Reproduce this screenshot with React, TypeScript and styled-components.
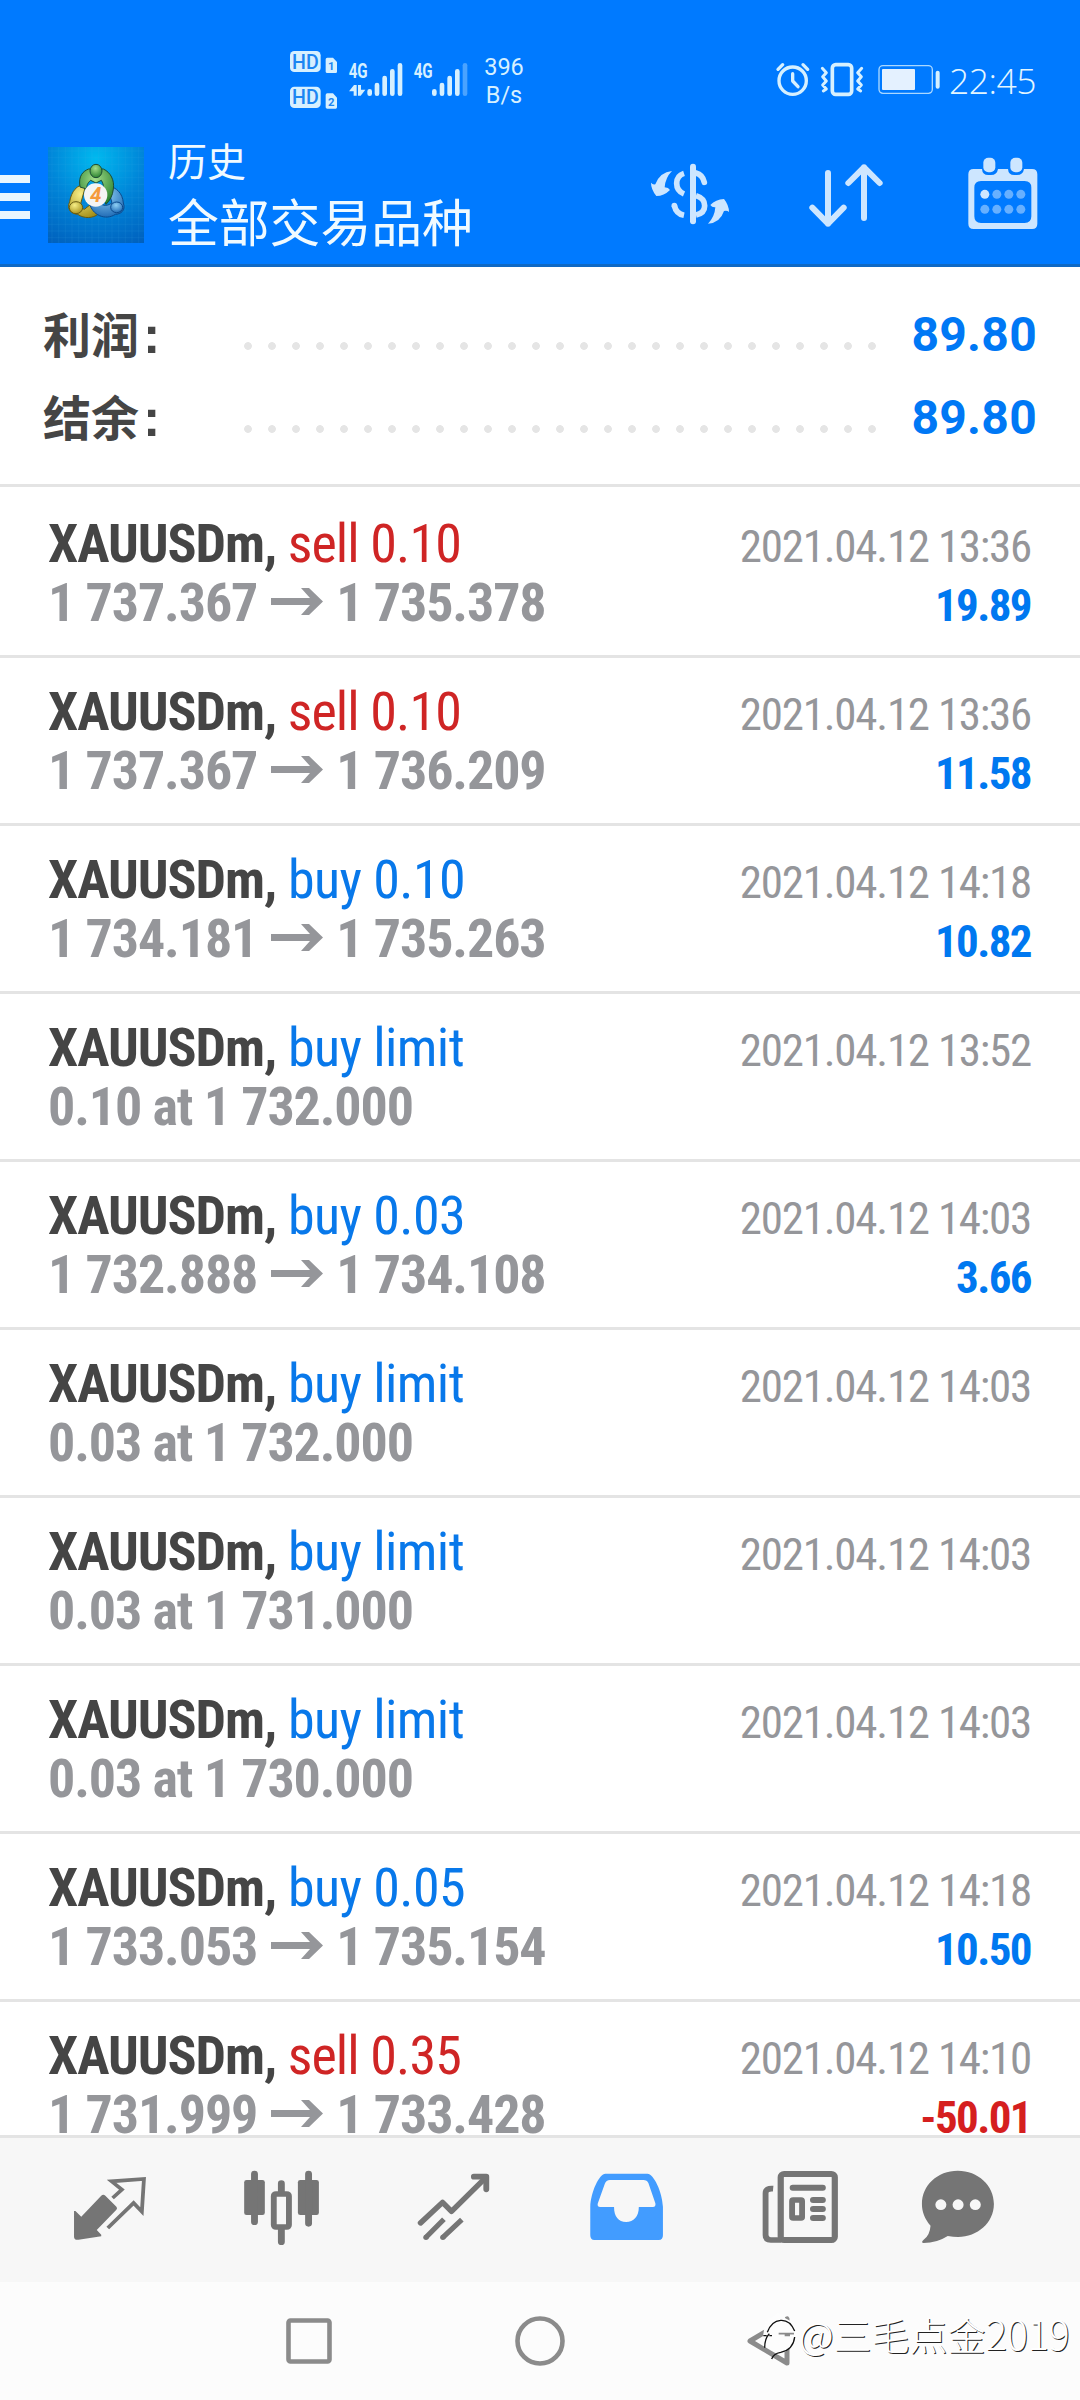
import React from "react";
import styled, { createGlobalStyle } from "styled-components";

const Global = createGlobalStyle`
  * { box-sizing: border-box; }
  body { margin: 0; background: #fff; font-family: Roboto, "Noto Sans CJK SC", sans-serif; }
  svg { display: block; flex: none; overflow: visible; }
`;

const Screen = styled.div`
  width: 1080px;
  height: 2400px;
  display: flex;
  flex-direction: column;
  overflow: hidden;
  background: #fff;
`;

const Header = styled.header`
  height: 267px;
  flex: none;
  background: #007aff;
  border-bottom: 3px solid #0f69c4;
`;

const StatusBar = styled.div`
  height: 130px;
  padding: 42px 43px 0 290px;
  display: flex;
  align-items: flex-start;
  color: #d6f0ff;
`;

const Speed = styled.div`
  width: 60px;
  margin: 11px 0 0 54px;
  font-size: 23.5px;
  line-height: 28px;
  text-align: center;
`;

const StatusRight = styled.div`
  margin-left: auto;
  display: flex;
  align-items: flex-start;
`;

const DeviceSlot = styled.div`
  margin-top: 20px;
`;

const Clock = styled.div`
  margin: 12px 0 0 7px;
  width: 88px;
  font: 300 35.5px/52px "Open Sans", sans-serif;
  letter-spacing: -0.5px;
  color: #e4f6ff;
  white-space: nowrap;
`;

const AppBar = styled.div`
  height: 134px;
  display: flex;
  align-items: flex-start;
  color: #f0faff;
`;

const Menu = styled.div`
  width: 30px;
  padding-top: 45px;
  display: grid;
  gap: 10px;
`;

const MenuLine = styled.span`
  height: 8px;
  background: #e9f6ff;
`;

const Logo = styled.div`
  margin: 17px 0 0 18px;
`;

const Titles = styled.div`
  margin-left: 24px;
  flex: 1;
  font-family: "Noto Sans CJK SC", sans-serif;
`;

const Section = styled.div`
  margin-top: 8px;
  font-size: 39px;
  line-height: 42px;
`;

const Title = styled.div`
  margin-top: 12px;
  font-size: 50.8px;
  line-height: 56px;
`;

const Actions = styled.div`
  display: flex;
  align-items: center;
  padding: 26px 41px 0 0;
`;

const Action = styled.div<{ $after?: number }>`
  margin-right: ${(p) => p.$after ?? 0}px;
`;

const Summary = styled.section`
  height: 220px;
  flex: none;
  padding: 26px 43px 0;
  border-bottom: 3px solid #e4e4e4;
`;

const SummaryRow = styled.div`
  height: 83px;
  display: flex;
  align-items: center;
  color: #454545;
  font-weight: 700;
  font-size: 48px;
`;

const SummaryLabel = styled.span`
  width: 193px;
  height: 83px;
  display: flex;
  font-family: "Noto Sans CJK SC", sans-serif;
  line-height: 78px;
`;

const Colon = styled.span`
  margin-left: 4px;
  font-family: "Liberation Sans", sans-serif;
  font-size: 52px;
  line-height: 84px;
`;

const Dots = styled.span`
  width: 648px;
  height: 8px;
  margin-top: 23px;
  background: radial-gradient(circle at 12px 4px, #e5e5e5 3.5px, transparent 4.2px) 0 0 / 24px 8px repeat-x;
`;

const SummaryValue = styled.span`
  margin-left: auto;
  color: #0078f5;
  letter-spacing: 0.3px;
  line-height: 83px;
`;

const List = styled.main`
  height: 1648px;
  flex: none;
  padding-top: 3px;
`;

const Row = styled.div`
  height: 168px;
  padding: 24px 48px 0;
  border-bottom: 3px solid #e4e4e4;
  display: grid;
  grid-template-columns: 1fr auto;
  grid-template-rows: 59px 59px;
  align-items: baseline;
  font-family: "Roboto Condensed", Roboto, sans-serif;
  font-stretch: 75%;
  font-size: 54px;
  line-height: 59px;
  white-space: nowrap;

  &:last-child {
    height: 133px;
    border-bottom: 0;
  }
`;

const Deal = styled.div<{ $sell?: boolean }>`
  color: ${(p) => (p.$sell ? "#cf2525" : "#0878ea")};
  letter-spacing: ${(p) => (p.$sell ? -0.9 : -0.6)}px;
`;

const Instrument = styled.b`
  color: #454545;
  letter-spacing: -1.05px;
`;

const Price = styled.div`
  color: #95969a;
  font-weight: 700;
  letter-spacing: -1.1px;
`;

const Arrow = styled.svg`
  display: inline-block;
  margin: 0 13px 0 14px;
  vertical-align: 5px;
`;

const Time = styled.div`
  margin-right: 1px;
  color: #95969a;
  font-size: 45px;
  letter-spacing: -1.25px;
  text-align: right;
`;

const Profit = styled.div<{ $loss?: boolean }>`
  margin-right: 1px;
  color: ${(p) => (p.$loss ? "#d51f1f" : "#0078f0")};
  font-size: 45px;
  font-weight: 700;
  letter-spacing: -1.6px;
  text-align: right;
`;

const Tabs = styled.nav`
  height: 147px;
  flex: none;
  border-top: 3px solid #e4e4e4;
  background: #f7f7f7;
  padding: 32px 48px 0 24px;
  display: grid;
  grid-template-columns: repeat(5, 172px) 148px;
  justify-items: center;
  align-items: start;
`;

const SystemNav = styled.div`
  position: relative;
  flex: 1;
  background: #fcfcfc;
  padding: 34px 290px 0 286px;
  display: flex;
  justify-content: space-between;
  align-items: flex-start;
`;

const Watermark = styled.div`
  position: absolute;
  left: 761px;
  top: 27px;
  display: flex;
  align-items: center;
  color: #fff;
  font: 300 38px/58px "Noto Sans CJK SC", sans-serif;
  text-shadow: 1px 1px 0 #222;
  white-space: nowrap;
`;

const WatermarkText = styled.span`
  margin-top: -5px;
`;

const WatermarkYear = styled.span`
  font-size: 40px;
  letter-spacing: -0.5px;
`;

type DealRecord = { side: "sell" | "buy"; what: string; from: string; to?: string; time: string; profit?: string };

const deals: DealRecord[] = [
  { side: "sell", what: "0.10", from: "1 737.367", to: "1 735.378", time: "2021.04.12 13:36", profit: "19.89" },
  { side: "sell", what: "0.10", from: "1 737.367", to: "1 736.209", time: "2021.04.12 13:36", profit: "11.58" },
  { side: "buy", what: "0.10", from: "1 734.181", to: "1 735.263", time: "2021.04.12 14:18", profit: "10.82" },
  { side: "buy", what: "limit", from: "0.10 at 1 732.000", time: "2021.04.12 13:52" },
  { side: "buy", what: "0.03", from: "1 732.888", to: "1 734.108", time: "2021.04.12 14:03", profit: "3.66" },
  { side: "buy", what: "limit", from: "0.03 at 1 732.000", time: "2021.04.12 14:03" },
  { side: "buy", what: "limit", from: "0.03 at 1 731.000", time: "2021.04.12 14:03" },
  { side: "buy", what: "limit", from: "0.03 at 1 730.000", time: "2021.04.12 14:03" },
  { side: "buy", what: "0.05", from: "1 733.053", to: "1 735.154", time: "2021.04.12 14:18", profit: "10.50" },
  { side: "sell", what: "0.35", from: "1 731.999", to: "1 733.428", time: "2021.04.12 14:10", profit: "-50.01" },
];

const PALE = "#d6f0ff";

function SignalIcons() {
  return (
    <svg width="130" height="68" viewBox="60 36 390 204" fill={PALE} fontFamily="Roboto" fontWeight="700">
      <rect x="60" y="63" width="92" height="63" rx="13" />
      <rect x="60" y="170" width="92" height="64" rx="13" />
      <path d="M172 83h17l12 13v29q0 4-4 4h-25q-5 0-5-4V88q0-5 5-5zM172 190h17l12 13v29q0 4-4 4h-25q-5 0-5-4v-37q0-5 5-5z" />
      <g fill="#1c86f2">
        <text x="66" y="116" fontSize="58" fontWeight="500" textLength="80" lengthAdjust="spacingAndGlyphs">HD</text>
        <text x="66" y="223" fontSize="58" fontWeight="500" textLength="80" lengthAdjust="spacingAndGlyphs">HD</text>
        <text x="174" y="121" fontSize="34">1</text>
        <text x="174" y="228" fontSize="34">2</text>
      </g>
      <text x="236" y="143" fontSize="58" textLength="57" lengthAdjust="spacingAndGlyphs">4G</text>
      <text x="431" y="143" fontSize="58" textLength="57" lengthAdjust="spacingAndGlyphs">4G</text>
      <path d="M237 184l15-19h8v32h-9v-13zM264 165h9v14h13l-14 18h-8z" />
      <g strokeWidth="14" strokeLinecap="round" stroke={PALE}>
        <path d="M299 184v7M321 165v26M344 144v47M367 124v67M390 106v85M493 184v7M516 165v26M539 144v47M562 124v67" />
        <path d="M585 106v85" opacity=".35" />
      </g>
    </svg>
  );
}

function DeviceIcons() {
  return (
    <svg width="166" height="36" viewBox="48 66 498 108" fill="none" stroke={PALE} strokeWidth="9" strokeLinecap="round" strokeLinejoin="round">
      <circle cx="98" cy="122" r="41" strokeWidth="10" />
      <path d="M98 101v22l16 17M54 88l14-14M143 88l-14-14" strokeWidth="10" />
      <rect x="217" y="74" width="58" height="89" rx="10" strokeWidth="11" />
      <path d="M187 85l12 13-11 12 11 13-11 12 11 12-9 6M305 85l-12 13 11 12-11 13 11 12-11 12 9 6" strokeWidth="9" />
      <rect x="357" y="77" width="160" height="83" rx="12" strokeWidth="4" opacity=".8" />
      <rect x="366" y="87" width="99" height="63" rx="3" fill="#e4f1ff" stroke="none" />
      <path d="M533 98v42" strokeWidth="12" />
    </svg>
  );
}

function AppLogo() {
  const grid = [24, 44, 64, 84, 104, 124, 144, 164, 184, 204, 224, 244, 264, 284];
  return (
    <svg width="96" height="96" viewBox="12 12 288 288">
      <defs>
        <radialGradient id="sky" cx=".5" cy=".12" r="1">
          <stop offset="0" stopColor="#00b9ef" />
          <stop offset=".5" stopColor="#0084d8" />
          <stop offset="1" stopColor="#0060bd" />
        </radialGradient>
        <radialGradient id="green" cx=".45" cy=".3" r=".75">
          <stop offset="0" stopColor="#a4dd8a" />
          <stop offset="1" stopColor="#237d2b" />
        </radialGradient>
        <radialGradient id="gold" cx=".4" cy=".3" r=".8">
          <stop offset="0" stopColor="#f6ee87" />
          <stop offset="1" stopColor="#a08a13" />
        </radialGradient>
        <radialGradient id="blue" cx=".45" cy=".3" r=".8">
          <stop offset="0" stopColor="#8fd0f5" />
          <stop offset="1" stopColor="#125fae" />
        </radialGradient>
      </defs>
      <path fill="url(#sky)" d="M12 12h288v288H12z" />
      <path stroke="#4db8ee" strokeOpacity=".22" strokeWidth="1.5" d={grid.map((g) => `M${g} 12v288M12 ${g}h288`).join("")} />
      <g stroke="#1d4c35" strokeWidth="3">
        <path fill="url(#gold)" d="M126 124C98 124 82 146 77 176c-10 22 4 36 24 38 20 14 46 12 62-1l-24-28-18 14-14-6z" stroke="#665b12" />
        <path fill="url(#blue)" d="M190 128c28 4 46 24 48 52 8 22-8 34-24 34-30 20-70 2-78-34l26-6c10 14 24 18 42 6z" stroke="#0c4b8d" />
        <path fill="url(#green)" d="M108 132C102 98 118 84 134 78h44c22 10 34 34 30 60-2 20-10 34-22 46l-14-30c10-14 8-28 0-42l-16 8-16-8c-10 8-12 16-12 26z" />
        <ellipse cx="156" cy="84" rx="18" ry="20" fill="url(#green)" />
        <ellipse cx="96" cy="194" rx="20" ry="18" fill="url(#gold)" stroke="#665b12" />
        <ellipse cx="218" cy="193" rx="18" ry="16" fill="url(#blue)" stroke="#0c4b8d" />
      </g>
      <circle cx="155" cy="156" r="35" fill="#f4f4f4" />
      <text x="155" y="178" textAnchor="middle" fontFamily="Roboto" fontStyle="italic" fontWeight="700" fontSize="62" fill="#f59a3c">4</text>
    </svg>
  );
}

function CurrencyIcon() {
  return (
    <svg width="80" height="66" viewBox="90 60 240 198" fill="#cde6ff">
      <g fill="none" stroke="#cde6ff" strokeWidth="17">
        <path d="M219 77v164" strokeLinecap="round" strokeWidth="18" />
        <path d="M192 97Q170 104 170 127T192 159" />
        <path d="M228 96Q248 101 253 124" strokeLinecap="round" />
        <path d="M228 164Q254 172 254 194T228 222" />
        <path d="M163 193Q168 218 192 223" />
      </g>
      <circle cx="163" cy="194" r="8.500" />
      <path d="M156 90Q120 93 106 130Q98 132 93 125Q93 145 109 165Q132 165 150 147Q146 140 134 139Q136 110 156 90z" />
      <path d="M264 248Q284 228 286 199Q276 200 271 192Q287 175 312 174Q327 193 327 213Q321 207 312 210Q300 246 264 248z" />
    </svg>
  );
}

function SortIcon() {
  return (
    <svg width="76" height="66" viewBox="564 60 228 198" fill="none" stroke="#cde6ff" strokeWidth="18" strokeLinecap="round" strokeLinejoin="round">
      <path d="M624 96v152M577 200l47 48 47-48M732 231V79M685 126l47-47 47 47" />
    </svg>
  );
}

function CalendarIcon() {
  return (
    <svg width="72" height="76" viewBox="1040 48 216 228" fill="#cde6ff">
      <path fillRule="evenodd" d="M1060 87h25q1 18 19 18h8q18 0 21-18h30q1 18 19 18h8q18 0 21-18h24q16 0 16 16v148q0 16-16 16h-175q-16 0-16-16V103q0-16 16-16zM1082 123q-20 0-20 20v86q0 20 20 20h131q20 0 20-20v-86q0-20-20-20z" />
      <rect x="1089" y="53" width="36" height="44" rx="15" />
      <rect x="1170" y="53" width="36" height="44" rx="15" />
      {[0, 1, 2, 3].map((i) => (
        <g key={i}>
          <circle cx={1093.5 + i * 36} cy="163" r="13.500" opacity={i ? 0.5 : 1} />
          <circle cx={1093.5 + i * 36} cy="208" r="13.500" opacity=".5" />
        </g>
      ))}
    </svg>
  );
}

const INK = "#757575";

const TabIcon = ({ x, children }: { x: number; children: React.ReactNode }) => (
  <svg width="80" height="80" viewBox={`${x} 180 232.3 240`} preserveAspectRatio="none" fill={INK}>
    {children}
  </svg>
);

export default function App() {
  return (
    <Screen>
      <Global />
      <Header>
        <StatusBar>
          <SignalIcons />
          <Speed>
            396
            <br />
            B/s
          </Speed>
          <StatusRight>
            <DeviceSlot>
              <DeviceIcons />
            </DeviceSlot>
            <Clock>22:45</Clock>
          </StatusRight>
        </StatusBar>
        <AppBar>
          <Menu>
            <MenuLine />
            <MenuLine />
            <MenuLine />
          </Menu>
          <Logo>
            <AppLogo />
          </Logo>
          <Titles>
            <Section>历史</Section>
            <Title>全部交易品种</Title>
          </Titles>
          <Actions>
            <Action $after={78}>
              <CurrencyIcon />
            </Action>
            <Action $after={83}>
              <SortIcon />
            </Action>
            <Action>
              <CalendarIcon />
            </Action>
          </Actions>
        </AppBar>
      </Header>
      <Summary>
        {["利润", "结余"].map((label) => (
          <SummaryRow key={label}>
            <SummaryLabel>
              {label}
              <Colon>:</Colon>
            </SummaryLabel>
            <Dots />
            <SummaryValue>89.80</SummaryValue>
          </SummaryRow>
        ))}
      </Summary>
      <List>
        {deals.map((d, i) => (
          <Row key={i}>
            <Deal $sell={d.side === "sell"}>
              <Instrument>XAUUSDm,</Instrument> {d.side} {d.what}
            </Deal>
            <Time>{d.time}</Time>
            <Price>
              {d.from}
              {d.to && (
                <>
                  <Arrow width="52" height="28" viewBox="0 0 52 28" fill="#95969a">
                    <path d="M0 10h39L30 0h8l14 13.500L38 27h-8l9-10H0z" />
                  </Arrow>
                  {d.to}
                </>
              )}
            </Price>
            <Profit $loss={d.profit?.startsWith("-")}>{d.profit}</Profit>
          </Row>
        ))}
      </List>
      <Tabs>
        <TabIcon x={203.3}>
          <path d="M294 257q6-5 12 0l32 33q4 5 0 9l-57 61 13 14v5l-66 10q-13 2-13-9v-77h4l17 17z" />
          <path d="M327 264l27-25-30-25 94-7-6 98-24-26-75 75" fill="none" stroke={INK} strokeWidth="11" />
        </TabIcon>
        <TabIcon x={702.7}>
          <rect x="709" y="210" width="60" height="105" rx="7" />
          <rect x="865" y="210" width="61" height="105" rx="7" />
          <path d="M739 192v143M896 192v148M817 221v25M817 355v40" stroke={INK} strokeWidth="20" strokeLinecap="round" />
          <rect x="795" y="252" width="44" height="99" rx="6" fill="none" stroke={INK} strokeWidth="17" />
        </TabIcon>
        <TabIcon x={1202.1}>
          <g fill="none" stroke={INK} strokeWidth="16" strokeLinejoin="round">
            <path d="M1221 339l64-62 26 27 100-102" strokeLinecap="round" />
            <path d="M1376 200h36v38" strokeLinecap="round" strokeWidth="17" />
            <path d="M1237 382l52-54M1286 382l55-53" strokeWidth="15" />
          </g>
          <circle cx="1237" cy="382" r="8" />
          <circle cx="1286" cy="382" r="8" />
        </TabIcon>
        <TabIcon x={133.6}>
          <path fill="#429cff" fillRule="evenodd" d="M190 191H312C330 191 355 245 357 290V376Q357 390 345 390H158Q146 390 146 376V290C148 245 172 191 190 191ZM203 210Q192 210 188 222L168 280Q165 291 175 291H215C215 320 228 336 250 336C272 336 287 320 287 291H328Q337 291 335 280L315 220Q311 210 300 210Z" />
        </TabIcon>
        <TabIcon x={633}>
          <g fill="none" stroke={INK}>
            <rect x="699" y="192" width="157" height="198" rx="10" strokeWidth="18" />
            <path d="M677 236q-22-2-22 14v125q0 15 15 15h30" strokeWidth="17" />
            <rect x="732" y="270" width="29" height="54" rx="3" strokeWidth="17" />
            <path d="M734 233h87M793 270h28M793 297h28M793 324h28" strokeWidth="18" strokeLinecap="round" />
          </g>
        </TabIcon>
        <TabIcon x={1097.6}>
          <path fillRule="evenodd" d="M1213 182C1272 182 1318 226 1318 282S1270 381 1214 381Q1200 381 1184 378Q1152 399 1114 399Q1105 397 1114 389Q1132 376 1134 347C1117 327 1109 306 1109 282C1109 226 1154 182 1213 182Z" />
          <g fill="#f7f7f7">
            <circle cx="1164" cy="284" r="16" />
            <circle cx="1214" cy="284" r="16" />
            <circle cx="1264" cy="284" r="16" />
          </g>
        </TabIcon>
      </Tabs>
      <SystemNav>
        <svg width="46" height="50" fill="none" stroke="#8b8b8b" strokeWidth="4.600">
          <rect x="2.500" y="4.500" width="41" height="41" rx="2" />
        </svg>
        <svg width="50" height="50" fill="none" stroke="#8b8b8b" strokeWidth="4.600">
          <circle cx="25" cy="25" r="22.500" />
        </svg>
        <svg width="43" height="50" fill="none" stroke="#8b8b8b" strokeWidth="5" strokeLinejoin="round">
          <path d="M3 25L40 3v44z" />
        </svg>
        <Watermark>
          <svg width="38" height="50" viewBox="63 30 114 150">
            <path d="M76 62l36-26 18 2 6 14 22 12 14 26-6 40-30 22-44-4-24-36z" fill="#fdfdfd" />
            <path d="M70 104h10M88 104h8M82 94Q94 60 122 58T164 90M74 140Q74 112 88 98M164 108Q160 146 122 154Q100 158 95 174" fill="none" stroke="#111" strokeWidth="4" />
            <path d="M116 98h46M134 103h16" stroke="#8b8b8b" strokeWidth="5" />
          </svg>
          <WatermarkText>
            @三毛点金<WatermarkYear>2019</WatermarkYear>
          </WatermarkText>
        </Watermark>
      </SystemNav>
    </Screen>
  );
}
